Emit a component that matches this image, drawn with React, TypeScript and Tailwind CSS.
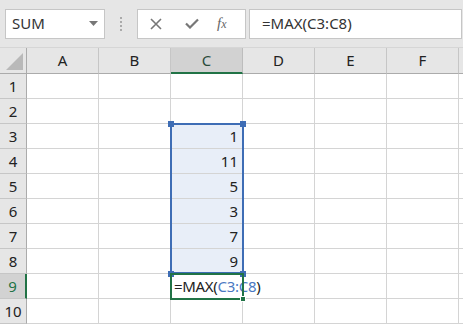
import React from "react";

const cols = ["A", "B", "C", "D", "E", "F"];
const rows = [1, 2, 3, 4, 5, 6, 7, 8, 9, 10];
const values: Record<number, string> = { 3: "1", 4: "11", 5: "5", 6: "3", 7: "7", 8: "9" };

const font = { fontFamily: '"Noto Sans", "Liberation Sans", "Noto Sans CJK JP", sans-serif' };

export default function App() {
  return (
    <div className="w-[463px] h-[325px] overflow-hidden bg-white text-[#222]" style={font}>
      {/* formula bar */}
      <div className="h-[48px] bg-[#e6e6e6] flex items-center pl-[5px] border-b border-[#d6d6d6]">
        <div className="w-[100px] h-[30px] bg-white border border-[#c6c6c6] flex items-center pl-[6px] pr-[6px]">
          <span className="text-[15px] text-[#333] flex-1">SUM</span>
          <svg width="9" height="5" viewBox="0 0 9 5"><path d="M0 0h9L4.5 5z" fill="#777" /></svg>
        </div>
        <div className="w-[32px] flex flex-col items-center gap-[2px]">
          <span className="w-[2px] h-[2px] bg-[#aaa]" />
          <span className="w-[2px] h-[2px] bg-[#aaa]" />
          <span className="w-[2px] h-[2px] bg-[#aaa]" />
          <span className="w-[2px] h-[2px] bg-[#aaa]" />
        </div>
        <div className="w-[109px] h-[30px] bg-white border border-[#c6c6c6] flex items-center">
          <svg className="ml-[12px]" width="12" height="12" viewBox="0 0 12 12">
            <path d="M1 1l10 10M11 1L1 11" stroke="#777" strokeWidth="1.6" />
          </svg>
          <svg className="ml-[23px]" width="14" height="11" viewBox="0 0 14 11">
            <path d="M1 5.5l4 4L13 1.5" stroke="#777" strokeWidth="2.2" fill="none" />
          </svg>
          <span className="ml-[18px] text-[15px] italic text-[#666]" style={{ fontFamily: '"Liberation Serif", serif' }}>
            f<span className="text-[12px]">x</span>
          </span>
        </div>
        <div className="ml-[3px] w-[213px] h-[30px] bg-white border border-[#c6c6c6] flex items-center pl-[12px]">
          <span className="text-[15px] text-[#333]">=MAX(C3:C8)</span>
        </div>
      </div>

      {/* grid */}
      <div className="relative">
        <div className="grid grid-cols-[27px_72px_72px_72px_72px_72px_72px_72px] grid-rows-[26px_repeat(10,25px)]">
          <div className="bg-[#e6e6e6] border-r border-b border-[#ababab] flex items-end justify-end p-[3px]">
            <svg width="17" height="17" viewBox="0 0 17 17"><path d="M17 0v17H0z" fill="#b9b9b9" /></svg>
          </div>
          {cols.map((c) => (
            <div
              key={c}
              className={
                c === "C"
                  ? "bg-[#d2d2d2] border-r border-[#bdbdbd] border-b-2 border-b-[#217346] flex items-center justify-center text-[15px] text-[#2a4a3a]"
                  : "bg-[#e6e6e6] border-r border-[#c6c6c6] border-b border-b-[#ababab] flex items-center justify-center text-[15px] text-[#222]"
              }
            >
              {c}
            </div>
          ))}
          <div className="bg-[#e6e6e6] border-b border-b-[#ababab]" />
          {rows.map((r) => (
            <React.Fragment key={r}>
              <div
                className={
                  r === 9
                    ? "bg-[#d2d2d2] border-r-2 border-r-[#217346] border-b border-[#c6c6c6] flex items-center justify-center text-[15px] text-[#217346]"
                    : "bg-[#e6e6e6] border-r border-r-[#ababab] border-b border-[#c6c6c6] flex items-center justify-center text-[15px] text-[#222]"
                }
              >
                {r}
              </div>
              {cols.map((c) => {
                const sel = c === "C" && r >= 3 && r <= 8;
                const active = c === "C" && r === 9;
                return (
                  <div
                    key={c}
                    className={
                      (sel ? "bg-[#e8eef8] " : "bg-white ") +
                      (active ? "border-b " : "border-r border-b ") +
                      "border-[#d4d4d4] flex items-center justify-end pr-[4px] text-[15px] text-[#222]"
                    }
                  >
                    {sel ? values[r] : ""}
                    {active ? (
                      <span className="relative z-10 w-full text-left pl-[3px] text-[15px] tracking-[-0.3px] whitespace-nowrap">
                        =MAX(<span className="text-[#4a78c2]">C3:C8</span>)
                      </span>
                    ) : null}
                  </div>
                );
              })}
              <div className="bg-white border-b border-[#d4d4d4]" />
            </React.Fragment>
          ))}
        </div>

        {/* selection range C3:C8 */}
        <div className="absolute left-[170px] top-[75px] w-[74px] h-[151px] border-2 border-[#3e6db5] pointer-events-none" />
        <span className="absolute left-[168px] top-[73px] w-[6px] h-[6px] bg-[#3e6db5]" />
        <span className="absolute left-[240px] top-[73px] w-[6px] h-[6px] bg-[#3e6db5]" />
        <span className="absolute left-[168px] top-[223px] w-[6px] h-[6px] bg-[#3e6db5]" />
        <span className="absolute left-[240px] top-[223px] w-[6px] h-[6px] bg-[#3e6db5]" />

        {/* active cell C9 */}
        <div className="absolute z-20 left-[170px] top-[225px] w-[74px] h-[27px] border-2 border-[#217346] pointer-events-none" />
        <span className="absolute z-20 left-[240px] top-[248px] w-[6px] h-[6px] bg-[#217346] border border-white" />
      </div>
    </div>
  );
}
